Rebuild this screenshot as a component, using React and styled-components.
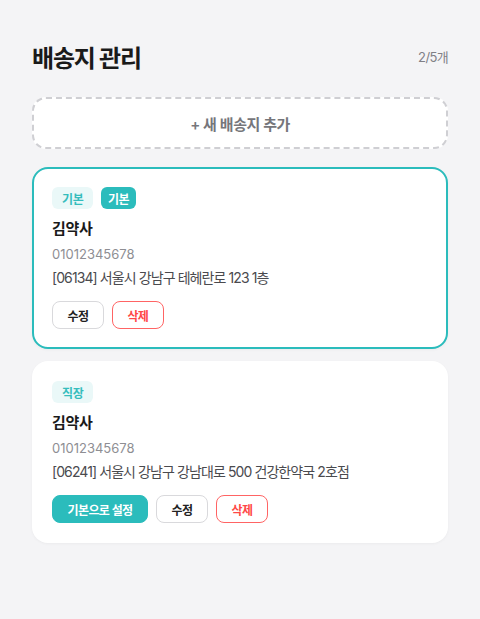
import React from "react";
import styled, { createGlobalStyle } from "styled-components";

const GlobalStyle = createGlobalStyle`
  * { box-sizing: border-box; }
  html, body { margin: 0; padding: 0; background: #f4f4f6; }
  body {
    font-family: Inter, "Noto Sans CJK KR", sans-serif;
    color: #222;
    -webkit-font-smoothing: antialiased;
  }
`;

const Page = styled.div`
  min-height: 619px;
  padding: 39px 32px 40px;
  background: #f4f4f6;
`;

const Header = styled.div`
  display: flex;
  align-items: center;
  justify-content: space-between;
  height: 34px;
  margin-bottom: 24px;
`;

const Title = styled.h1`
  margin: 0;
  font-size: 24px;
  font-weight: 700;
  color: #1a1a1a;
  letter-spacing: -0.05em;
`;

const Count = styled.span`
  font-size: 13px;
  color: #808086;
  letter-spacing: -0.05em;
`;

const AddButton = styled.button`
  display: flex;
  align-items: center;
  justify-content: center;
  width: 100%;
  height: 52px;
  margin-bottom: 18px;
  background: #fff;
  border: 2px dashed #cfcfd3;
  border-radius: 14px;
  font-family: inherit;
  font-size: 15px;
  font-weight: 600;
  letter-spacing: -0.03em;
  color: #76767b;
  cursor: pointer;
`;

const List = styled.div`
  display: flex;
  flex-direction: column;
  gap: 12px;
`;

const Card = styled.div`
  background: #fff;
  border: 2px solid ${(p) => (p.$selected ? "#2bbcbc" : "transparent")};
  border-radius: 16px;
  padding: 18px;
  box-shadow: 0 1px 3px rgba(0, 0, 0, 0.04);
`;

const Badges = styled.div`
  display: flex;
  gap: 8px;
`;

const Badge = styled.span`
  display: inline-flex;
  align-items: center;
  height: 22px;
  padding: 0 ${(p) => (p.$solid ? "6.5px" : "10px")};
  border-radius: 6px;
  font-size: 12px;
  font-weight: 600;
  letter-spacing: -0.03em;
  background: ${(p) => (p.$solid ? "#2bbcbc" : "#eaf8f8")};
  color: ${(p) => (p.$solid ? "#fff" : "#35bdbd")};
`;

const Name = styled.div`
  margin-top: 9px;
  font-size: 15px;
  line-height: 22px;
  font-weight: 700;
  letter-spacing: -0.02em;
  color: #1a1a1a;
`;

const Phone = styled.div`
  margin-top: 3px;
  font-size: 13px;
  line-height: 22px;
  color: #8e8e93;
`;

const Address = styled.div`
  margin-top: 2px;
  font-size: 14px;
  line-height: 22px;
  letter-spacing: -0.065em;
  color: #4a4a4e;
`;

const Actions = styled.div`
  display: flex;
  gap: 8px;
  margin-top: 12px;
`;

const variants = {
  primary: { bg: "#2bbcbc", border: "#2bbcbc", color: "#fff" },
  default: { bg: "#fff", border: "#d9d9dc", color: "#222" },
  danger: { bg: "#fff", border: "#ff6464", color: "#ff4747" },
};

const ActionButton = styled.button`
  height: 28px;
  padding: 0 14.5px;
  border-radius: 8px;
  font-family: inherit;
  font-size: 12px;
  font-weight: 600;
  letter-spacing: -0.05em;
  cursor: pointer;
  background: ${(p) => variants[p.$variant].bg};
  border: 1px solid ${(p) => variants[p.$variant].border};
  color: ${(p) => variants[p.$variant].color};
`;

const addresses = [
  {
    id: 1,
    selected: true,
    badges: [{ label: "기본" }, { label: "기본", solid: true }],
    name: "김약사",
    phone: "01012345678",
    address: "[06134] 서울시 강남구 테헤란로 123 1층",
    isDefault: true,
  },
  {
    id: 2,
    selected: false,
    badges: [{ label: "직장" }],
    name: "김약사",
    phone: "01012345678",
    address: "[06241] 서울시 강남구 강남대로 500 건강한약국 2호점",
    isDefault: false,
  },
];

export default function App() {
  return (
    <>
      <GlobalStyle />
      <Page>
        <Header>
          <Title>배송지 관리</Title>
          <Count>2/5개</Count>
        </Header>
        <AddButton>+ 새 배송지 추가</AddButton>
        <List>
          {addresses.map((a) => (
            <Card key={a.id} $selected={a.selected}>
              <Badges>
                {a.badges.map((b, i) => (
                  <Badge key={i} $solid={b.solid}>
                    {b.label}
                  </Badge>
                ))}
              </Badges>
              <Name>{a.name}</Name>
              <Phone>{a.phone}</Phone>
              <Address>{a.address}</Address>
              <Actions>
                {!a.isDefault && (
                  <ActionButton $variant="primary">기본으로 설정</ActionButton>
                )}
                <ActionButton $variant="default">수정</ActionButton>
                <ActionButton $variant="danger">삭제</ActionButton>
              </Actions>
            </Card>
          ))}
        </List>
      </Page>
    </>
  );
}
